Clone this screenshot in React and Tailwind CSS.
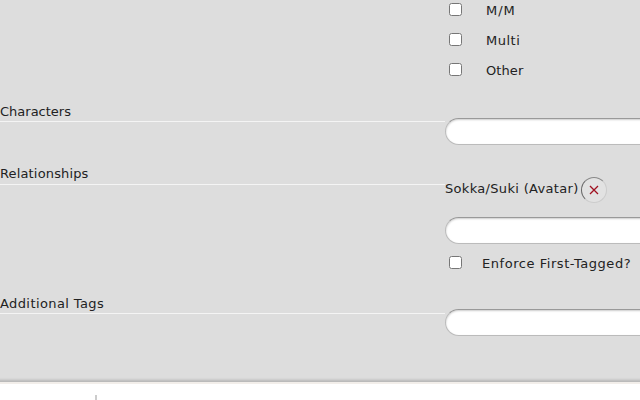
import React from 'react';

function CheckRow({ label, tracking }) {
  return (
    <label className="flex items-center h-[30px] pl-[4px]">
      <input type="checkbox" className="w-[13px] h-[13px] -mt-[1px]" />
      <span className={`ml-[24px] mt-[1px] ${tracking}`}>{label}</span>
    </label>
  );
}

function TextBox() {
  return (
    <input
      type="text"
      className="block w-[300px] h-[27px] shrink-0 bg-white rounded-[14px] border border-[#bbbbbb] border-t-[#999999] shadow-[inset_0_1px_2px_#cccccc] outline-none"
    />
  );
}

function FieldLabel({ children, className }) {
  return (
    <div className={`w-[445px] shrink-0 leading-[20px] border-b border-[#f4f4f4] ${className}`}>
      {children}
    </div>
  );
}

export default function App() {
  return (
    <div className="w-[640px] h-[400px] overflow-hidden bg-white text-[13px] text-[#222222] font-['DejaVu_Sans','Liberation_Sans',sans-serif]">
      <div className="h-[382px] bg-[#dddddd] shadow-[inset_0_-5px_3px_-3px_#b4b4b4] overflow-hidden">
        <div className="flex justify-end -mt-[5px] h-[109px]">
          <div className="w-[195px]">
            <CheckRow label="M/M" tracking="tracking-[1px]" />
            <CheckRow label="Multi" tracking="tracking-[0.5px]" />
            <CheckRow label="Other" tracking="tracking-[0.1px]" />
          </div>
        </div>

        <div className="flex h-[62px] mt-[-4px]">
          <FieldLabel className="h-[22px] pt-[2px]">Characters</FieldLabel>
          <div className="pt-[18px] w-[195px]">
            <TextBox />
          </div>
        </div>

        <div className="flex h-[130px]">
          <FieldLabel className="h-[23px] pt-[2px] tracking-[0.15px]">Relationships</FieldLabel>
          <div className="w-[195px] shrink-0">
            <div className="flex items-center h-[28px] mt-[13px] whitespace-nowrap">
              <span className="tracking-[0.32px]">Sokka/Suki (Avatar)</span>
              <span className="ml-[2px] mt-[1px] w-[26px] h-[26px] shrink-0 rounded-full bg-[#e2e2e2] border border-[#cccccc] border-l-[#666666] border-t-[#888888] flex items-center justify-center">
                <svg width="10" height="10" viewBox="0 0 10 10">
                  <path d="M1 1 L9 9 M9 1 L1 9" stroke="#a01020" strokeWidth="1.3" />
                </svg>
              </span>
            </div>
            <div className="mt-[14px]">
              <TextBox />
            </div>
            <label className="flex items-center h-[20px] mt-[8px] pl-[4px] whitespace-nowrap">
              <input type="checkbox" className="w-[13px] h-[13px]" />
              <span className="ml-[20px] mt-[3px] tracking-[0.55px]">Enforce First-Tagged?</span>
            </label>
          </div>
        </div>

        <div className="flex">
          <FieldLabel className="h-[22px] pt-[2px] tracking-[0.4px]">Additional Tags</FieldLabel>
          <div className="pt-[17px] w-[195px]">
            <TextBox />
          </div>
        </div>
      </div>
      <div className="h-[18px] border-t-2 border-[#f2eeea] relative">
        <div className="absolute left-[95px] top-[11px] w-[2px] h-[5px] bg-[#cccccc]" />
      </div>
    </div>
  );
}
